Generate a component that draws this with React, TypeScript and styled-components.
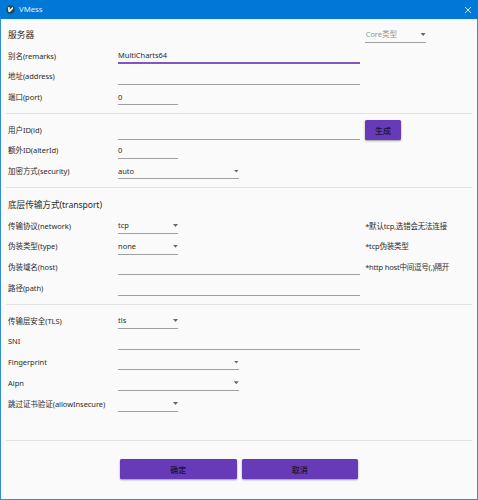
import React from "react";
import styled, { createGlobalStyle } from "styled-components";

const Global = createGlobalStyle`
  * { box-sizing: border-box; }
  body { margin: 0; overflow: hidden; }
`;

const Window = styled.div`
  width: 478px;
  height: 500px;
  display: flex;
  flex-direction: column;
  background: #fafafa;
  border: 1px solid #2f8fdc;
  border-top: 0;
  color: #2a2a2a;
  font-family: "Noto Sans", "Noto Sans CJK SC", sans-serif;
  font-size: 7.5px;
  line-height: 12px;
  letter-spacing: -0.05px;
  white-space: nowrap;
`;

const TitleBar = styled.header`
  height: 19px;
  margin: 0 -1px;
  flex: none;
  display: flex;
  align-items: center;
  padding: 0 6px;
  background: #0078d7;
  color: #e4f1fb;
`;

const Title = styled.span`
  flex: 1;
  padding: 0 0 1px 4px;
  font-size: 7.8px;
`;

const Section = styled.section<{ $height: number; $top?: number }>`
  height: ${(p) => p.$height}px;
  flex: none;
  margin: 0 5px;
  padding: ${(p) => p.$top ?? 0}px 0 0 2px;
  border-bottom: 1px solid #e2e2e2;
`;

const Row = styled.div<{ $height?: number }>`
  display: grid;
  grid-template-columns: 109.6px 242.6px 1fr;
  height: ${(p) => p.$height ?? 20.75}px;
`;

const Label = styled.label`
  padding-top: 6.5px;
`;

const Heading = styled.h2<{ $spacing?: number }>`
  grid-column: span 2;
  margin: 0;
  padding-top: 10px;
  font-size: 8.7px;
  font-weight: 400;
  letter-spacing: ${(p) => p.$spacing ?? 0}px;
`;

const Field = styled.div<{ $width: number; $focus?: boolean }>`
  display: flex;
  justify-content: space-between;
  align-items: flex-start;
  width: ${(p) => p.$width}px;
  height: 100%;
  padding: 6px 0.2px 0 0.5px;
  border-bottom: ${(p) => (p.$focus ? "2px solid #7e57c2" : "1px solid #a0a0a0")};
`;

const CoreField = styled(Field)`
  padding-top: 9px;
  color: #959595;
`;

const Caret = styled.span`
  width: 5px;
  height: 3px;
  margin-top: 5px;
  background: #666;
  clip-path: polygon(0 0, 100% 0, 50% 100%);
`;

const Aside = styled.div`
  padding-left: 5px;
`;

const Note = styled.div`
  padding-top: 6.5px;
  letter-spacing: -0.2px;
`;

const Button = styled.button<{ $width: number }>`
  display: flex;
  align-items: center;
  justify-content: center;
  width: ${(p) => p.$width}px;
  height: 20px;
  padding: 1px 0 0;
  border: 0;
  border-radius: 1.5px;
  background: #673ab7;
  box-shadow: 0 1px 2px rgba(0, 0, 0, 0.4);
  color: #1c1230;
  font: 500 8px/12px "Noto Sans CJK SC", sans-serif;
`;

const IdButton = styled(Button)`
  margin-top: 3px;
`;

const Footer = styled.footer`
  display: flex;
  gap: 5px;
  padding: 18px 0 0 119px;
`;

const Logo = () => (
  <svg width="9" height="9" viewBox="0 0 18 18">
    <circle cx="9" cy="9" r="8.5" fill="#24484f" />
    <path d="M3.500 4.500h4.500l-1 5L14 3.500v4L8 14H5z" fill="#f2f6f5" />
  </svg>
);

const Close = () => (
  <svg width="8" height="8" viewBox="0 0 8 8">
    <path d="M1 1l6 6M7 1l-6 6" stroke="#eaf4fc" strokeWidth="0.9" fill="none" />
  </svg>
);

type ItemProps = {
  label: string;
  value?: string;
  width: number;
  select?: boolean;
  focus?: boolean;
  note?: string;
  action?: string;
};

const Item = ({ label, value, width, select, focus, note, action }: ItemProps) => (
  <Row>
    <Label>{label}</Label>
    <Field $width={width} $focus={focus}>
      <span>{value}</span>
      {select && <Caret />}
    </Field>
    <Aside>
      {note && <Note>{note}</Note>}
      {action && <IdButton $width={35.5}>{action}</IdButton>}
    </Aside>
  </Row>
);

const WIDE = 242.6;
const MEDIUM = 121.4;
const NARROW = 60.6;

export default function App() {
  return (
    <>
      <Global />
      <Window>
        <TitleBar>
          <Logo />
          <Title>VMess</Title>
          <Close />
        </TitleBar>
        <Section $height={95}>
          <Row $height={24}>
            <Heading>服务器</Heading>
            <Aside>
              <CoreField $width={NARROW}>
                <span>Core类型</span>
                <Caret />
              </CoreField>
            </Aside>
          </Row>
          <Item label="别名(remarks)" value="MultiCharts64" width={WIDE} focus />
          <Item label="地址(address)" width={WIDE} />
          <Item label="端口(port)" value="0" width={NARROW} />
        </Section>
        <Section $height={74} $top={3}>
          <Item label="用户ID(id)" width={WIDE} action="生成" />
          <Item label="额外ID(alterId)" value="0" width={NARROW} />
          <Item label="加密方式(security)" value="auto" width={MEDIUM} select />
        </Section>
        <Section $height={117} $top={1}>
          <Row $height={24}>
            <Heading $spacing={-0.1}>底层传输方式(transport)</Heading>
          </Row>
          <Item label="传输协议(network)" value="tcp" width={NARROW} select note="*默认tcp,选错会无法连接" />
          <Item label="伪装类型(type)" value="none" width={NARROW} select note="*tcp伪装类型" />
          <Item label="伪装域名(host)" width={WIDE} note="*http host中间逗号(,)隔开" />
          <Item label="路径(path)" width={WIDE} />
        </Section>
        <Section $height={136} $top={3}>
          <Item label="传输层安全(TLS)" value="tls" width={NARROW} select />
          <Item label="SNI" width={WIDE} />
          <Item label="Fingerprint" width={MEDIUM} select />
          <Item label="Alpn" width={MEDIUM} select />
          <Item label="跳过证书验证(allowInsecure)" width={NARROW} select />
        </Section>
        <Footer>
          <Button $width={116.5}>确定</Button>
          <Button $width={116.5}>取消</Button>
        </Footer>
      </Window>
    </>
  );
}
